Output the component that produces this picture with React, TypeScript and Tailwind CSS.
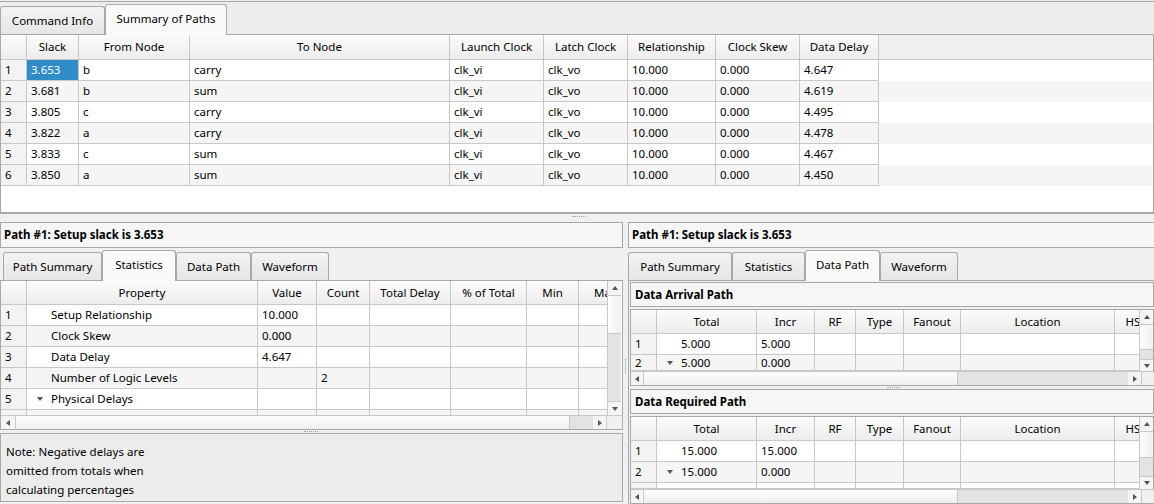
import React from "react";

type Col = { label: string; cls: string };

const line = "border-[#c8c8c8]";
const frame = "border-[#a8a8a8]";

function Tab({ label, active, cls }: { label: string; active?: boolean; cls: string }) {
  if (active) {
    return (
      <div className={`${cls} h-[31px] -mb-px relative z-10 shrink-0 bg-[#fafafa] border border-b-0 ${frame} rounded-t-[3px] flex items-center justify-center pb-[2px]`}>
        {label}
      </div>
    );
  }
  return (
    <div className={`${cls} h-[28px] shrink-0 bg-gradient-to-b from-[#f3f3f3] to-[#e6e6e6] border border-b-0 ${frame} rounded-t-[3px] flex items-center justify-center`}>
      {label}
    </div>
  );
}

function Arrow({ dir }: { dir: "up" | "down" | "left" | "right" }) {
  const pts = {
    up: "1,6 4,2 7,6",
    down: "1,2 4,6 7,2",
    left: "6,1 2,4 6,7",
    right: "2,1 6,4 2,7",
  }[dir];
  return (
    <svg width="8" height="8" viewBox="0 0 8 8">
      <polygon points={pts} fill="#555" />
    </svg>
  );
}

function HeadRow({ cols, rn, h = "h-[24px]" }: { cols: Col[]; rn: string; h?: string }) {
  return (
    <div className={`flex ${h} shrink-0 border-b ${line} bg-[#efefef]`}>
      <div className={`${rn} shrink-0 border-r ${line} bg-gradient-to-b from-[#fbfbfb] to-[#ededed]`} />
      {cols.map((c) => (
        <div
          key={c.label}
          className={`${c.cls} shrink-0 border-r ${line} bg-gradient-to-b from-[#fbfbfb] to-[#ededed] flex items-center justify-center whitespace-nowrap overflow-hidden`}
        >
          {c.label}
        </div>
      ))}
    </div>
  );
}

function BodyRow({ n, cols, cells, rn, odd, sel, h = "h-[21px]" }: {
  n: string; cols: Col[]; cells: React.ReactNode[]; rn: string; odd: boolean; sel?: number; h?: string;
}) {
  return (
    <div className={`flex ${h} shrink-0 ${odd ? "bg-white" : "bg-[#f5f5f5]"}`}>
      <div className={`${rn} shrink-0 border-r border-b ${line} bg-[#f3f3f3] pl-[4px] flex items-center`}>{n}</div>
      {cols.map((c, i) => (
        <div
          key={c.label}
          className={`${c.cls} shrink-0 border-r border-b ${line} flex items-center pl-[4px] whitespace-nowrap overflow-hidden ${sel === i ? "bg-[#308cc6] text-white" : ""}`}
        >
          {cells[i]}
        </div>
      ))}
    </div>
  );
}

function Tree({ text, open }: { text: string; open?: boolean }) {
  return (
    <span className="flex items-center">
      <span className="w-[22px] flex justify-center -ml-[2px]">{open ? <Arrow dir="down" /> : null}</span>
      {text}
    </span>
  );
}

function VScroll({ thumb, track, down = "h-[14px]" }: { thumb: string; track: string; down?: string }) {
  return (
    <div className={`w-[14px] shrink-0 flex flex-col border-l ${line} bg-[#f4f4f4]`}>
      <div className="h-[14px] shrink-0 flex items-center justify-center"><Arrow dir="up" /></div>
      <div className={`${thumb} shrink-0 bg-gradient-to-r from-[#fdfdfd] to-[#f0f0f0] border-y ${line}`} />
      <div className={`${track} shrink-0 bg-[#e3e3e3]`} />
      <div className={`${down} shrink-0 flex items-center justify-center border-t ${line}`}><Arrow dir="down" /></div>
    </div>
  );
}

function HScroll({ left, thumb, track, corner }: { left: string; thumb: string; track: string; corner: string }) {
  return (
    <div className={`h-[14px] shrink-0 flex border-t ${line} bg-[#f4f4f4]`}>
      <div className={`${left} shrink-0 flex items-center justify-center`}><Arrow dir="left" /></div>
      <div className={`${thumb} shrink-0 bg-gradient-to-b from-[#fdfdfd] to-[#efefef] border-x ${line}`} />
      <div className={`${track} shrink-0 bg-[#e3e3e3]`} />
      <div className={`w-[14px] shrink-0 flex items-center justify-center border-r ${line}`}><Arrow dir="right" /></div>
      <div className={`${corner} shrink-0 bg-[#f0f0f0]`} />
    </div>
  );
}

const topCols: Col[] = [
  { label: "Slack", cls: "w-[52px]" },
  { label: "From Node", cls: "w-[111px]" },
  { label: "To Node", cls: "w-[260px]" },
  { label: "Launch Clock", cls: "w-[94px]" },
  { label: "Latch Clock", cls: "w-[84px]" },
  { label: "Relationship", cls: "w-[88px]" },
  { label: "Clock Skew", cls: "w-[84px]" },
  { label: "Data Delay", cls: "w-[79px]" },
];

const paths = [
  ["3.653", "b", "carry", "4.647"],
  ["3.681", "b", "sum", "4.619"],
  ["3.805", "c", "carry", "4.495"],
  ["3.822", "a", "carry", "4.478"],
  ["3.833", "c", "sum", "4.467"],
  ["3.850", "a", "sum", "4.450"],
];

const statCols: Col[] = [
  { label: "Property", cls: "w-[231px]" },
  { label: "Value", cls: "w-[59px]" },
  { label: "Count", cls: "w-[53px]" },
  { label: "Total Delay", cls: "w-[81px]" },
  { label: "% of Total", cls: "w-[76px]" },
  { label: "Min", cls: "w-[52px]" },
  { label: "Max", cls: "w-[54px]" },
];

const stats: [string, React.ReactNode[]][] = [
  ["1", [<Tree text="Setup Relationship" />, "10.000", "", "", "", "", ""]],
  ["2", [<Tree text="Clock Skew" />, "0.000", "", "", "", "", ""]],
  ["3", [<Tree text="Data Delay" />, "4.647", "", "", "", "", ""]],
  ["4", [<Tree text="Number of Logic Levels" />, "", "2", "", "", "", ""]],
  ["5", [<Tree text="Physical Delays" open />, "", "", "", "", "", ""]],
];

const dpCols: Col[] = [
  { label: "Total", cls: "w-[100px]" },
  { label: "Incr", cls: "w-[58px]" },
  { label: "RF", cls: "w-[41px]" },
  { label: "Type", cls: "w-[48px]" },
  { label: "Fanout", cls: "w-[57px]" },
  { label: "Location", cls: "w-[154px]" },
  { label: "HS/LP", cls: "w-[54px]" },
];

function TitleBox({ text }: { text: string }) {
  return (
    <div className={`h-[26px] shrink-0 border ${frame} bg-[#f6f6f6] flex items-center pl-[3px] font-bold`}>{text}</div>
  );
}

function SectionBox({ text }: { text: string }) {
  return (
    <div className={`h-[25px] shrink-0 border ${frame} bg-[#f6f6f6] flex items-center pl-[4px] font-bold`}>{text}</div>
  );
}

function DataPathTable({ a, thumb, track, down, partial }: {
  a: string; thumb: string; track: string; down: string; partial?: boolean;
}) {
  return (
    <div className={`shrink-0 border ${frame} bg-white flex flex-col`}>
      <div className="flex">
        <div className="w-[511px] overflow-hidden flex flex-col">
          <HeadRow cols={dpCols} rn="w-[26px]" />
          <BodyRow n="1" cols={dpCols} rn="w-[26px]" odd cells={[<span className="pl-[20px]">{a}</span>, a, "", "", "", "", ""]} />
          <BodyRow n="2" cols={dpCols} rn="w-[26px]" odd={false} h={partial ? "h-[21px]" : "h-[16px]"} cells={[<Tree text={a} open />, "0.000", "", "", "", "", ""]} />
          {partial ? <BodyRow n="" cols={dpCols} rn="w-[26px]" odd h="h-[6px]" cells={["", "", "", "", "", "", ""]} /> : null}
        </div>
        <VScroll thumb={thumb} track={track} down={down} />
      </div>
      <HScroll left="w-[12px]" thumb="w-[315px]" track="w-[170px]" corner="w-[14px]" />
    </div>
  );
}

export default function App() {
  return (
    <div className="w-[1154px] h-[504px] overflow-hidden bg-[#f0f0f0] text-[11.5px] text-black font-['Noto_Sans','Open_Sans',sans-serif] leading-none flex flex-col">
      {/* top: summary of paths */}
      <div className="h-[214px] shrink-0 flex flex-col pt-px">
        <div className={`h-[33px] shrink-0 border-t ${frame} bg-[#ededed] flex items-end`}>
          <Tab label="Command Info" cls="w-[105px]" />
          <Tab label="Summary of Paths" cls="w-[122px]" active />
        </div>
        <div className={`flex-1 border border-b-2 ${frame} bg-white flex flex-col`}>
          <HeadRow cols={topCols} rn="w-[26px]" h="h-[25px]" />
          {paths.map((p, i) => (
            <BodyRow
              key={i}
              n={String(i + 1)}
              cols={topCols}
              rn="w-[26px]"
              odd={i % 2 === 0}
              sel={i === 0 ? 0 : undefined}
              cells={[p[0], p[1], p[2], "clk_vi", "clk_vo", "10.000", "0.000", p[3]]}
            />
          ))}
        </div>
      </div>

      {/* splitter */}
      <div className="h-[5px] shrink-0 flex pl-[572px]">
        <div className="mt-[2px] w-[14px] h-px border-t border-dotted border-[#a0a0a0]" />
      </div>

      {/* bottom panes */}
      <div className="flex-1 flex min-h-0">
        {/* left pane */}
        <div className="w-[623px] shrink-0 flex flex-col pt-[3px]">
          <TitleBox text="Path #1: Setup slack is 3.653" />
          <div className="h-[32px] shrink-0 flex items-end pl-[3px]">
            <Tab label="Path Summary" cls="w-[99px]" />
            <Tab label="Statistics" cls="w-[74px]" active />
            <Tab label="Data Path" cls="w-[75px]" />
            <Tab label="Waveform" cls="w-[78px]" />
          </div>
          <div className={`h-[150px] shrink-0 border ${frame} bg-white flex flex-col`}>
            <div className="flex h-[134px]">
              <div className="w-[606px] overflow-hidden flex flex-col">
                <HeadRow cols={statCols} rn="w-[26px]" />
                {stats.map(([n, cells], i) => (
                  <BodyRow key={n} n={n} cols={statCols} rn="w-[26px]" odd={i % 2 === 0} cells={cells} />
                ))}
                <BodyRow n="" cols={statCols} rn="w-[26px]" odd={false} h="h-[8px]" cells={["", "", "", "", "", "", ""]} />
              </div>
              <VScroll thumb="h-[39px]" track="h-[67px]" />
            </div>
            <HScroll left="w-[14px]" thumb="w-[555px]" track="w-[23px]" corner="w-[14px]" />
          </div>
          <div className="h-[3px] shrink-0 flex pl-[304px]">
            <div className="mt-[1px] w-[14px] h-px border-t border-dotted border-[#a0a0a0]" />
          </div>
          <div className={`h-[69px] shrink-0 border ${frame} bg-[#ececec] pl-[5px] pt-[8px] leading-[19px]`}>
            <div>Note: Negative delays are</div>
            <div>omitted from totals when</div>
            <div>calculating percentages</div>
          </div>
        </div>

        {/* vertical splitter */}
        <div className="w-[5px] shrink-0 flex items-center justify-center">
          <div className="h-[14px] w-px border-l border-dotted border-[#a0a0a0] mt-[8px]" />
        </div>

        {/* right pane */}
        <div className="w-[528px] shrink-0 flex flex-col pt-[3px]">
          <TitleBox text="Path #1: Setup slack is 3.653" />
          <div className="h-[32px] shrink-0 flex items-end">
            <Tab label="Path Summary" cls="w-[104px]" />
            <Tab label="Statistics" cls="w-[73px]" />
            <Tab label="Data Path" cls="w-[75px]" active />
            <Tab label="Waveform" cls="w-[78px]" />
          </div>
          <div className={`flex-1 border ${frame} bg-[#f0f0f0] p-px flex flex-col gap-[2px]`}>
            <SectionBox text="Data Arrival Path" />
            <DataPathTable a="5.000" thumb="h-[26px]" track="h-[9px]" down="h-[12px]" />
            <div className="h-0 shrink-0 flex pl-[257px] -mt-[1px]">
              <div className="w-[14px] h-px border-t border-dotted border-[#a0a0a0]" />
            </div>
            <SectionBox text="Data Required Path" />
            <DataPathTable a="15.000" thumb="h-[27px]" track="h-[18px]" down="h-[12px]" partial />
          </div>
        </div>
      </div>
    </div>
  );
}
